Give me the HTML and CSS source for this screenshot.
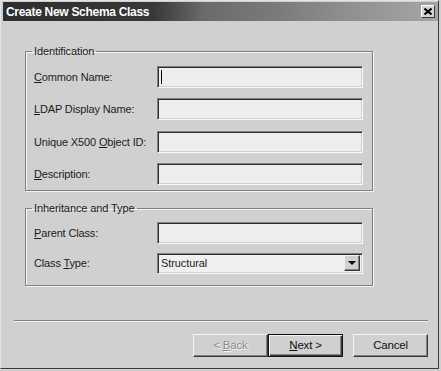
FILE: index.html
```html
<!DOCTYPE html>
<html lang="en">
<head>
  <meta charset="UTF-8">
  <title>Create New Schema Class</title>
  <link rel="stylesheet" href="styles.css">
</head>
<body>
  <div class="window">
    <div class="titlebar">
      <span class="title">Create New Schema Class</span>
      <span class="close">
        <svg width="8" height="7" viewBox="0 0 8 7"><path d="M0.5 0.5 L7.5 6.5 M7.5 0.5 L0.5 6.5" stroke="#000" stroke-width="2"/></svg>
      </span>
    </div>
    <div class="dialog">
      <fieldset class="group ident">
        <legend>Identification</legend>
        <div class="field">
          <label><u>C</u>ommon Name:</label>
          <div class="textbox"><span class="caret"></span></div>
        </div>
        <div class="field">
          <label><u>L</u>DAP Display Name:</label>
          <div class="textbox"></div>
        </div>
        <div class="field">
          <label>Unique X500 <u>O</u>bject ID:</label>
          <div class="textbox"></div>
        </div>
        <div class="field">
          <label><u>D</u>escription:</label>
          <div class="textbox"></div>
        </div>
      </fieldset>

      <fieldset class="group inherit">
        <legend>Inheritance and Type</legend>
        <div class="field">
          <label><u>P</u>arent Class:</label>
          <div class="textbox"></div>
        </div>
        <div class="field">
          <label>Class <u>T</u>ype:</label>
          <div class="combo">
            <span class="combo-value">Structural</span>
            <span class="combo-arrow"><span class="tri"></span></span>
          </div>
        </div>
      </fieldset>

      <div class="separator"></div>

      <div class="buttons">
        <button class="btn disabled">&lt; <u>B</u>ack</button>
        <button class="btn default"><u>N</u>ext &gt;</button>
        <button class="btn cancel">Cancel</button>
      </div>
    </div>
  </div>
</body>
</html>
```

FILE: styles.css
```css
/* Classic dialog look */
body {
  margin: 0;
  padding: 0;
  background-color: #d0d0d0;
  font-family: "Liberation Sans", Arial, sans-serif;
  font-size: 11px;
  color: #1c1c1c;
}

.window {
  width: 439px;
  height: 369px;
  box-sizing: border-box;
  border-top: 1px solid #e4e4e4;
  border-left: 1px solid #e4e4e4;
  border-right: 1px solid #383838;
  border-bottom: 1px solid #383838;
  padding: 1px 0 0 2px;
  background-color: #d0d0d0;
}

/* Title bar */
.titlebar {
  height: 19px;
  width: 435px;
  display: flex;
  align-items: center;
  justify-content: space-between;
  background: linear-gradient(to right, #2e2e2e 0, #383838 150px, #6a6a6a 200px, #7c7c7c 280px, #8e8e8e 340px, #a6a6a6 100%);
}

.title {
  color: #fff;
  font-weight: bold;
  font-size: 12px;
  letter-spacing: -0.3px;
  padding-left: 3px;
  padding-top: 1px;
}

.close {
  width: 14px;
  height: 13px;
  box-sizing: border-box;
  margin-right: 3px;
  display: flex;
  align-items: center;
  justify-content: center;
  background-color: #d4d4d4;
  border: 1px solid;
  border-color: #fff #383838 #383838 #fff;
}

/* Dialog content */
.dialog {
  padding-left: 22px;
}

.group {
  width: 348px;
  box-sizing: border-box;
  margin: 0;
  padding: 8px 8px 5px 8px;
  border: 1px solid #808080;
  box-shadow: inset 1px 1px 0 #f4f4f4, 1px 1px 0 #f4f4f4;
  display: flex;
  flex-direction: column;
  gap: 10.3px;
}

.group legend {
  padding: 0 2px;
  margin-left: -2px;
  line-height: 13px;
  font-size: 11px;
  letter-spacing: -0.1px;
}

.ident {
  margin-top: 24px;
}

.inherit {
  margin-top: 11px;
  padding-top: 7px;
  padding-bottom: 11px;
  gap: 9px;
}

.field {
  display: flex;
  align-items: center;
}

.field label {
  width: 123px;
  flex-shrink: 0;
  font-size: 11px;
  letter-spacing: -0.15px;
}

.textbox {
  width: 206px;
  height: 22px;
  box-sizing: border-box;
  background-color: #eeeeee;
  border: 1px solid;
  border-color: #808080 #f8f8f8 #f8f8f8 #808080;
  box-shadow: inset 1px 1px 0 #2e2e2e, inset -1px -1px 0 #d0d0d0;
  display: flex;
  align-items: center;
  padding-left: 3px;
}

.caret {
  width: 1px;
  height: 14px;
  background-color: #000;
}

.combo {
  width: 206px;
  height: 21px;
  box-sizing: border-box;
  background-color: #f0f0f0;
  border: 1px solid;
  border-color: #808080 #f8f8f8 #f8f8f8 #808080;
  box-shadow: inset 1px 1px 0 #2e2e2e, inset -1px -1px 0 #d0d0d0;
  display: flex;
  align-items: center;
  justify-content: space-between;
  padding: 2px 2px 2px 3px;
}

.combo-value {
  font-size: 11px;
  letter-spacing: -0.1px;
}

.combo-arrow {
  width: 16px;
  height: 16px;
  box-sizing: border-box;
  background-color: #d0d0d0;
  border: 1px solid;
  border-color: #f0f0f0 #383838 #383838 #f0f0f0;
  box-shadow: inset -1px -1px 0 #808080;
  display: flex;
  align-items: center;
  justify-content: center;
}

.tri {
  width: 0;
  height: 0;
  border-left: 4px solid transparent;
  border-right: 4px solid transparent;
  border-top: 4px solid #000;
}

/* Bottom */
.separator {
  width: 414px;
  margin: 34px 0 0 -11px;
  border-top: 1px solid #808080;
  border-bottom: 1px solid #f4f4f4;
}

.buttons {
  width: 414px;
  margin: 12px 0 0 -11px;
  display: flex;
  justify-content: flex-end;
}

.btn {
  width: 75px;
  height: 23px;
  box-sizing: border-box;
  padding: 0;
  font-family: "Liberation Sans", Arial, sans-serif;
  font-size: 11.5px;
  letter-spacing: -0.2px;
  color: #111;
  background-color: #d0d0d0;
  border: 1px solid;
  border-color: #f4f4f4 #383838 #383838 #f4f4f4;
  box-shadow: inset -1px -1px 0 #808080;
}

.disabled {
  color: #8c8c8c;
  text-shadow: 1px 1px 0 #f4f4f4;
}

.default {
  border: 1px solid #111;
  box-shadow: inset 1px 1px 0 #f4f4f4, inset -1px -1px 0 #383838, inset -2px -2px 0 #808080;
}

.cancel {
  margin-left: 10px;
}
```
